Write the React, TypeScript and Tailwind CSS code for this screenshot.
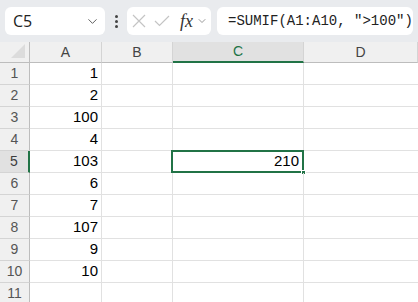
import { ChevronDown } from 'lucide-react';

const values: (number | null)[] = [1, 2, 100, 4, 103, 6, 7, 107, 9, 10, null];
const columns = ['A', 'B', 'C', 'D'];

export default function App() {
  return (
    <div className="w-[418px] h-[302px] overflow-hidden bg-white font-['Liberation_Sans',Arial,sans-serif]">
      {/* Formula bar */}
      <div className="h-[42px] bg-[#e9ebee] flex items-center px-[5px] gap-0">
        <div className="w-[100px] h-[28px] bg-white rounded-[6px] flex items-center justify-between pl-[8px] pr-[5px] font-['Open_Sans',sans-serif] text-[16px] text-[#222]">
          <span>C5</span>
          <ChevronDown size={15} strokeWidth={1.5} className="text-[#555]" />
        </div>
        <div className="w-[22px] flex flex-col items-center gap-[2px]">
          <span className="w-[3px] h-[3px] rounded-full bg-[#444]" />
          <span className="w-[3px] h-[3px] rounded-full bg-[#444]" />
          <span className="w-[3px] h-[3px] rounded-full bg-[#444]" />
        </div>
        <div className="w-[84px] h-[28px] bg-white rounded-[6px] flex items-center pl-[5px] gap-[8px]">
          <svg width="14" height="14" viewBox="0 0 14 14" fill="none" stroke="#c4c4c4" strokeWidth="1.2">
            <path d="M1 1L13 13M13 1L1 13" />
          </svg>
          <svg width="16" height="12" viewBox="0 0 16 12" fill="none" stroke="#c4c4c4" strokeWidth="1.2">
            <path d="M1 6L5.5 10.5L15 1" />
          </svg>
          <span className="font-['Liberation_Serif',serif] italic text-[18px] text-[#333] leading-none ml-[2px]">fx</span>
          <ChevronDown size={12} strokeWidth={1.5} className="text-[#777] -ml-[5px]" />
        </div>
        <div className="ml-[6px] flex-1 h-[28px] bg-white rounded-[6px] flex items-center pl-[11px] font-['Liberation_Mono',monospace] text-[14px] text-[#222] whitespace-pre">
          =SUMIF(A1:A10, "&gt;100")
        </div>
      </div>

      {/* Grid */}
      <div className="grid grid-cols-[30px_72px_71px_131px_1fr]">
        {/* Header row */}
        <div className="h-[21px] bg-[#f0f0f0] border-r border-b border-[#bdbdbd] relative overflow-hidden">
          <div className="absolute right-[4px] bottom-[4px] w-0 h-0 border-l-[14px] border-l-transparent border-b-[14px] border-b-[#dcdcdc]" />
        </div>
        {columns.map((c) => (
          <div
            key={c}
            className={
              c === 'C'
                ? 'h-[21px] bg-[#e1e1e1] border-r border-[#d4d4d4] border-b-2 border-b-[#217346] flex items-center justify-center text-[14px] text-[#217346]'
                : 'h-[21px] bg-[#f0f0f0] border-r border-[#d4d4d4] border-b border-b-[#bdbdbd] flex items-center justify-center text-[14px] text-[#444]'
            }
          >
            {c}
          </div>
        ))}

        {values.map((v, i) => {
          const row = i + 1;
          const sel = row === 5;
          return [
            <div
              key={`h${row}`}
              className={
                sel
                  ? 'h-[22px] bg-[#e1e1e1] border-r-2 border-r-[#217346] border-b border-b-[#d4d4d4] flex items-center justify-center text-[14px] text-[#3c3c3c]'
                  : 'h-[22px] bg-[#f0f0f0] border-r border-r-[#bdbdbd] border-b border-b-[#d4d4d4] flex items-center justify-center text-[14px] text-[#555]'
              }
            >
              {row}
            </div>,
            <div
              key={`a${row}`}
              className="h-[22px] border-r border-b border-[#e1e1e1] flex items-center justify-end pr-[3px] text-[15px] text-black"
            >
              {v}
            </div>,
            <div key={`b${row}`} className="h-[22px] border-r border-b border-[#e1e1e1]" />,
            <div
              key={`c${row}`}
              className="h-[22px] border-r border-b border-[#e1e1e1] relative flex items-center justify-end pr-[4px] text-[15px] text-black"
            >
              {sel && (
                <>
                  <div className="absolute -left-[2px] -top-[1px] -right-[1px] -bottom-[1px] border-2 border-[#217346]" />
                  <div className="absolute -right-[3px] -bottom-[3px] w-[5px] h-[5px] bg-[#217346] border border-white" />
                  <span className="relative">210</span>
                </>
              )}
            </div>,
            <div key={`d${row}`} className="h-[22px] border-b border-[#e1e1e1]" />,
          ];
        })}
      </div>
    </div>
  );
}
